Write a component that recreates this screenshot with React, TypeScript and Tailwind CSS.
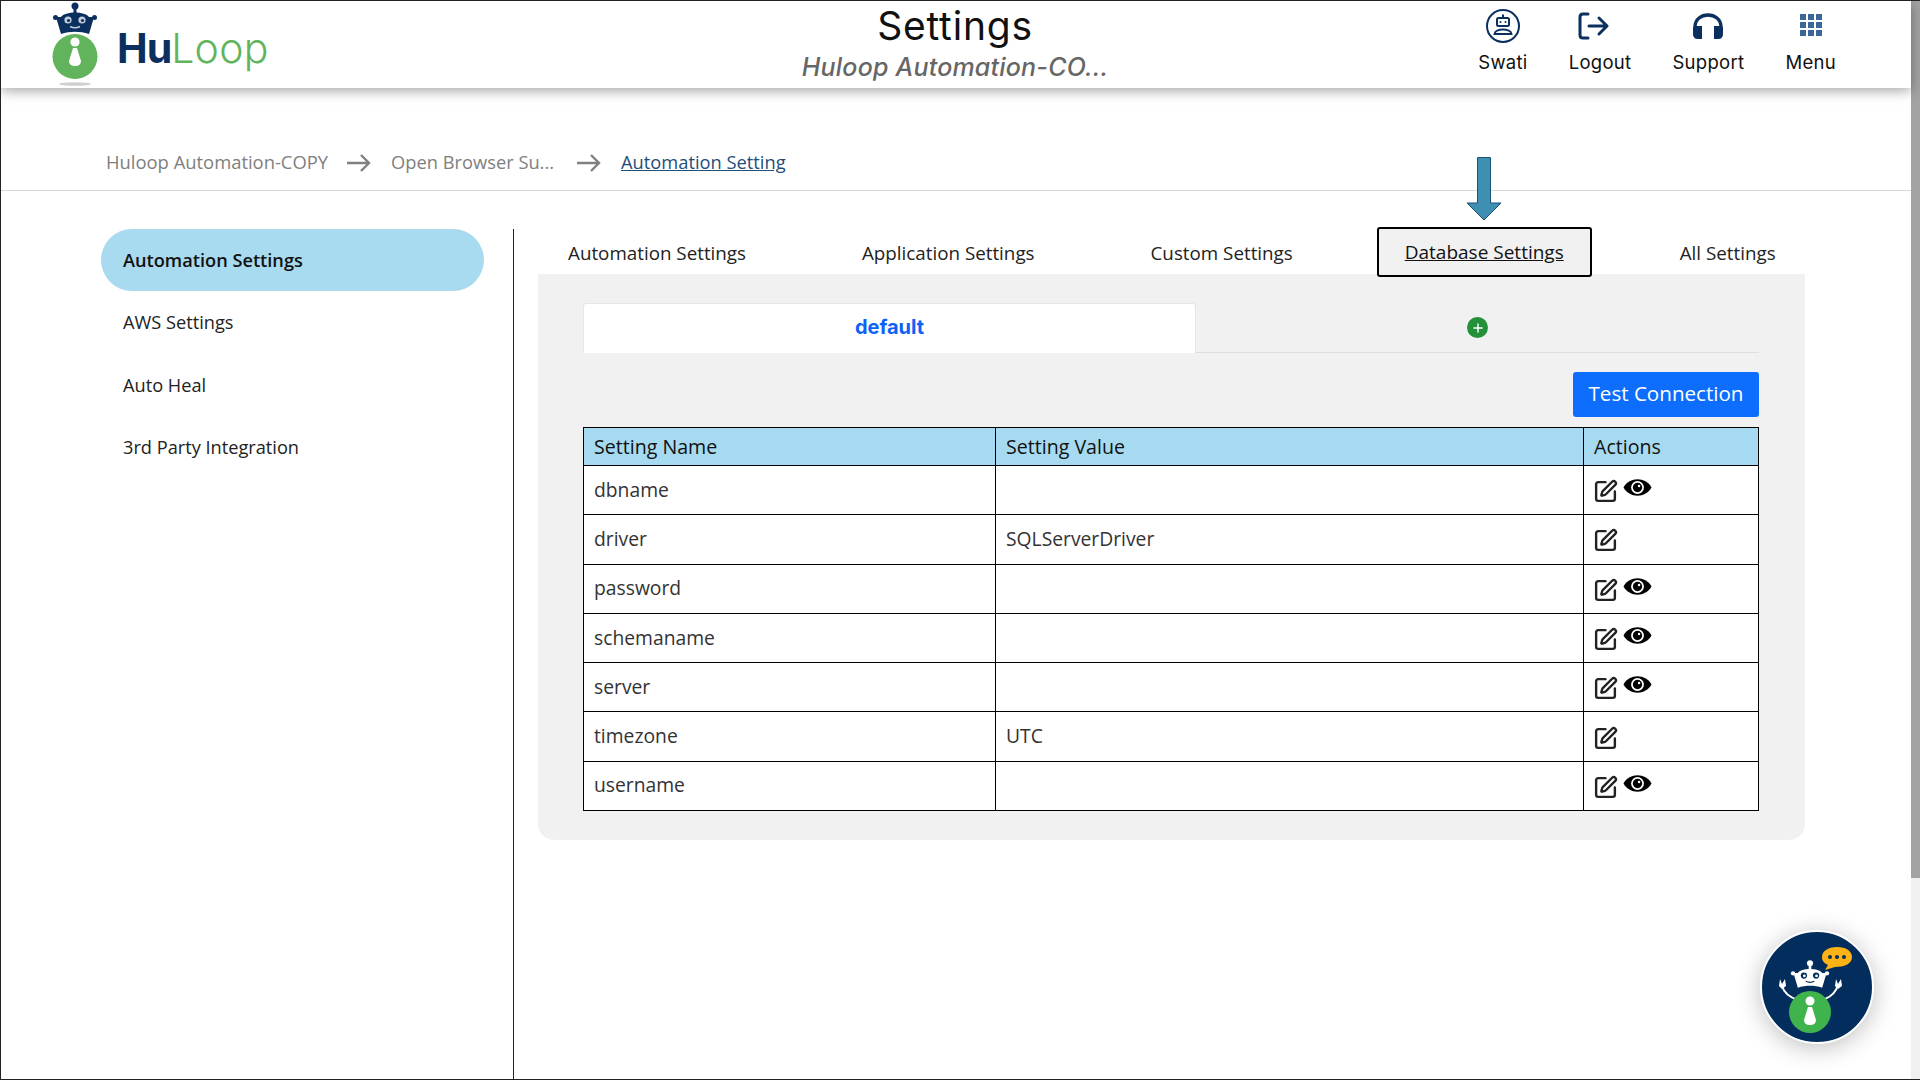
import type { ReactNode } from "react";
import { SquarePen, Plus } from "lucide-react";

const rows = [
	{ name: "dbname", value: "", eye: true },
	{ name: "driver", value: "SQLServerDriver", eye: false },
	{ name: "password", value: "", eye: true },
	{ name: "schemaname", value: "", eye: true },
	{ name: "server", value: "", eye: true },
	{ name: "timezone", value: "UTC", eye: false },
	{ name: "username", value: "", eye: true },
];

const sideItems = ["AWS Settings", "Auto Heal", "3rd Party Integration"];
const tabs = [
	"Automation Settings",
	"Application Settings",
	"Custom Settings",
	"Database Settings",
	"All Settings",
];

function RobotHead({ fill, eye }: { fill: string; eye: string }) {
	return (
		<g>
			<circle cx="23" cy="5" r="3.5" fill={fill} />
			<rect x="21.5" y="7" width="3" height="5" fill={fill} />
			<path
				d="M9 16 C13 10 33 10 37 16 L42 16 L37 33 C28 30 18 30 9 33 L4 16 Z"
				fill={fill}
			/>
			<circle cx="3.5" cy="16.5" r="2.5" fill={fill} />
			<circle cx="42.5" cy="16.5" r="2.5" fill={fill} />
			<circle cx="16" cy="19" r="3.6" fill={eye} />
			<circle cx="30" cy="19" r="3.6" fill={eye} />
			<circle cx="16.5" cy="19.5" r="1.6" fill={fill} />
			<circle cx="30.5" cy="19.5" r="1.6" fill={fill} />
			<path d="M18 25.5 Q23 28 28 25.5" stroke={eye} strokeWidth="1.4" fill="none" />
		</g>
	);
}

function Logo() {
	return (
		<svg width="46" height="86" viewBox="0 0 46 86" className="shrink-0">
			<RobotHead fill="#0b2f5f" eye="#c3cedb" />
			<circle cx="23" cy="55.5" r="22.5" fill="#62b45c" />
			<circle cx="23" cy="41" r="4.6" fill="#fff" />
			<path d="M21 47 H25 L29 60 Q29 65 23 65 Q17 65 17 60 Z" fill="#fff" />
			<ellipse cx="23" cy="83" rx="16" ry="1.8" fill="#cfcfcf" />
		</svg>
	);
}

function BotButton() {
	return (
		<div className="fixed right-[46px] bottom-[36px] w-[114px] h-[114px] rounded-full bg-[#032d5d] border-2 border-white shadow-[0_4px_24px_rgba(0,0,0,0.25)] overflow-hidden">
			<svg width="110" height="110" viewBox="0 0 110 110">
				<path
					d="M60 25 C60 18 68 15 75 15 C84 15 90 19 90 25 C90 32 82 35 73 35 L63 38 L66 33 C62 31 60 29 60 25 Z"
					fill="#fdb316"
				/>
				<circle cx="68" cy="25" r="2" fill="#032d5d" />
				<circle cx="75" cy="25" r="2" fill="#032d5d" />
				<circle cx="82" cy="25" r="2" fill="#032d5d" />
				<path
					d="M20 54 Q23 64 36 68 M76 53 Q73 63 63 67"
					stroke="#fff"
					strokeWidth="2"
					fill="none"
				/>
				<path
					d="M18 47 L20 52 L23 47 L24 54 L20 57 L17 54 Z M74 47 L76 52 L79 47 L80 54 L76 57 L73 54 Z"
					fill="#fff"
				/>
				<g transform="translate(28 27) scale(0.87)">
					<RobotHead fill="#fff" eye="#032d5d" />
				</g>
				<circle cx="48" cy="80" r="21" fill="#3fb44d" />
				<circle cx="48" cy="69" r="4.5" fill="#fff" />
				<path d="M46 75 H50 L54 88 Q54 93 48 93 Q42 93 42 88 Z" fill="#fff" />
			</svg>
		</div>
	);
}

function NavItem({ label, icon }: { label: string; icon: ReactNode }) {
	return (
		<div className="flex flex-col items-center">
			<div className="h-[38px] flex items-center justify-center">{icon}</div>
			<span className="text-[18.5px] leading-[24px] mt-[5px] tracking-[0.3px] text-[#111]">
				{label}
			</span>
		</div>
	);
}

function BreadArrow({ className }: { className: string }) {
	return (
		<svg width="24" height="20" viewBox="0 0 24 20" fill="none" className={className}>
			<path d="M0 10 H22 M14 2 L22 10 L14 18" stroke="#808080" strokeWidth="2.4" />
		</svg>
	);
}

function EyeIcon() {
	return (
		<svg width="29" height="19" viewBox="0 0 28 18" className="mb-[5px] ml-[5px]">
			<path d="M0.5 9 C6 -1.5 22 -1.5 27.5 9 C22 19.5 6 19.5 0.5 9 Z" fill="#000" />
			<circle cx="14" cy="9" r="6.2" fill="#fff" />
			<circle cx="14" cy="9" r="4.5" fill="#000" />
			<circle cx="15.5" cy="7.5" r="1.2" fill="#fff" />
		</svg>
	);
}

export default function App() {
	return (
		<div className="h-[1080px] overflow-hidden flex bg-white border-y border-l border-[#222] font-['Open_Sans',sans-serif] text-[#222]">
			<div className="flex-1 flex flex-col min-w-0">
				<header className="h-[87px] shrink-0 bg-white flex shadow-[0_3px_12px_rgba(0,0,0,0.35)] z-10 font-['Inter',sans-serif]">
					<div className="w-[954px] pl-[51px] flex items-start">
						<Logo />
						<div className="ml-[19px] mt-[22px] text-[41px] leading-[50px]">
							<span className="font-bold text-[#0b2f5f] tracking-[-1px]">Hu</span>
							<span className="font-light text-[#62b45c] tracking-[0.3px]">Loop</span>
						</div>
					</div>
					<div className="w-0 flex flex-col items-center">
						<div className="text-[39px] leading-[50px] tracking-[0.8px] whitespace-nowrap text-[#111]">
							Settings
						</div>
						<div className="text-[25px] leading-[32px] italic font-medium tracking-[0.2px] whitespace-nowrap text-[#666]">
							Huloop Automation-CO...
						</div>
					</div>
					<div className="ml-auto mr-[75px] mt-[6px] flex gap-[41px]">
						<NavItem
							label="Swati"
							icon={
								<svg width="36" height="36" viewBox="0 0 36 36" fill="none">
									<circle cx="18" cy="18" r="16" stroke="#0b2f5f" strokeWidth="2" />
									<rect x="12" y="10" width="12" height="8" rx="1.5" stroke="#0b2f5f" strokeWidth="2" />
									<path d="M18 6.5 V10" stroke="#0b2f5f" strokeWidth="2" />
									<circle cx="15.5" cy="14" r="1" fill="#0b2f5f" />
									<circle cx="20.5" cy="14" r="1" fill="#0b2f5f" />
									<path d="M9.5 26 C10 20 26 20 26.5 26 Z" stroke="#0b2f5f" strokeWidth="2" />
								</svg>
							}
						/>
						<NavItem
							label="Logout"
							icon={
								<svg width="32" height="28" viewBox="0 0 32 28" fill="none" className="-ml-[12px]">
									<path
										d="M10 2 H5 Q2 2 2 5 V23 Q2 26 5 26 H10"
										stroke="#0b2f5f"
										strokeWidth="3"
										strokeLinecap="round"
									/>
									<path
										d="M11 14 H29 M21 6 L29 14 L21 22"
										stroke="#0b2f5f"
										strokeWidth="3"
										strokeLinecap="round"
										strokeLinejoin="round"
									/>
								</svg>
							}
						/>
						<NavItem
							label="Support"
							icon={
								<svg width="32" height="28" viewBox="0 0 32 28" fill="none">
									<path d="M3 18 V15 C3 -1 29 -1 29 15 V18" stroke="#0b2f5f" strokeWidth="3.4" />
									<path d="M1 17 Q1 14 4 14 H10 V27 H6 Q1 27 1 22 Z" fill="#0b2f5f" />
									<path d="M31 17 Q31 14 28 14 H22 V27 H26 Q31 27 31 22 Z" fill="#0b2f5f" />
								</svg>
							}
						/>
						<NavItem
							label="Menu"
							icon={
								<div className="grid grid-cols-3 gap-[2px] -mt-[2px]">
									{Array.from({ length: 9 }).map((_, i) => (
										<div key={i} className="w-[6px] h-[6px] bg-[#3b6798]" />
									))}
								</div>
							}
						/>
					</div>
				</header>

				<div className="h-[103px] shrink-0 border-b border-[#d8d8d8] pl-[105px] pt-[61px] flex items-start text-[18.4px] leading-[26px] text-[#808080]">
					<span>Huloop Automation-COPY</span>
					<BreadArrow className="ml-[19px] mr-[20px] mt-[4px]" />
					<span className="text-[18.3px]">Open Browser Su...</span>
					<BreadArrow className="ml-[23px] mr-[20px] mt-[4px]" />
					<span className="text-[18.3px] text-[#1f4e79] underline">Automation Setting</span>
				</div>

				<div className="flex-1 flex min-h-0">
					<aside className="w-[513px] mt-[38px] shrink-0 border-r border-[#222] pl-[100px] pr-[29px] text-[18.2px]">
						<div className="h-[62px] rounded-[31px] bg-[#a8daf0] pl-[22px] pt-[1px] flex items-center font-semibold text-[#111]">
							Automation Settings
						</div>
						{sideItems.map((s) => (
							<div key={s} className="h-[62.5px] pl-[22px] pt-[1px] flex items-center">
								{s}
							</div>
						))}
					</aside>

					<main className="flex-1 pl-[24px] pr-[106px] pt-[36px] min-w-0">
						<div className="flex gap-[58px] pl-[1px] text-[18.8px] text-[#222]">
							{tabs.map((t) =>
								t === "Database Settings" ? (
									<div
										key={t}
										className="relative z-10 h-[50px] w-[215px] -ml-[3px] -mr-[2px] pt-[1px] flex items-center justify-center underline bg-[#f1f1f1] border-2 border-black rounded-[3px] text-[19px] text-[#111]"
									>
										{t}
										<svg
											width="36"
											height="64"
											viewBox="0 0 36 64"
											className="absolute -top-[72px] left-1/2 -translate-x-1/2"
										>
											<path
												d="M11.5 0.5 H24.5 V46 H35 L18 63 L1 46 H11.5 Z"
												fill="#3f8fb3"
												stroke="#1b4f78"
											/>
										</svg>
									</div>
								) : (
									<div
										key={t}
										className={
											t === "All Settings"
												? "h-[50px] pl-[32px] flex items-center pt-[3px]"
												: "h-[50px] px-[29px] flex items-center pt-[3px]"
										}
									>
										{t}
									</div>
								),
							)}
						</div>
						<div className="-mt-[3px] h-[566px] bg-[#f1f1f1] rounded-b-[16px] pl-[45px] pr-[46px] pt-[29px]">
							<div className="flex h-[50px] border-b border-[#dedede]">
								<div className="w-[613px] h-[50px] bg-white border border-[#e6e6e6] border-b-0 rounded-t-[3px] pb-[4px] flex items-center justify-center font-['Inter',sans-serif] font-bold text-[20px] text-[#0d62f5]">
									default
								</div>
								<div className="flex-1 flex items-center justify-center">
									<div className="w-[21px] h-[21px] rounded-full bg-[#23903a] flex items-center justify-center">
										<Plus size={14} strokeWidth={2.5} color="#fff" />
									</div>
								</div>
							</div>
							<div className="flex justify-end mt-[19px]">
								<button className="w-[186px] h-[45px] rounded-[3px] bg-[#0d6efd] text-white text-[20.6px] font-medium pb-[2px]">
									Test Connection
								</button>
							</div>
							<table className="mt-[10px] w-full table-fixed border-collapse text-[19.3px] text-[#333]">
								<thead>
									<tr className="h-[38px] bg-[#a6daf0]">
										<th className="w-[412px] border border-black pl-[10px] text-left font-medium text-[19.6px] text-[#111]">
											Setting Name
										</th>
										<th className="w-[588px] border border-black pl-[10px] text-left font-medium text-[19.6px] text-[#111]">
											Setting Value
										</th>
										<th className="border border-black pl-[10px] text-left font-medium text-[19.6px] text-[#111]">
											Actions
										</th>
									</tr>
								</thead>
								<tbody>
									{rows.map((r) => (
										<tr key={r.name} className="h-[49.3px]">
											<td className="border border-black pl-[10px] bg-white">{r.name}</td>
											<td className="border border-black pl-[10px] bg-white">{r.value}</td>
											<td className="border border-black pl-[9px] bg-white">
												<div className="flex items-center">
													<SquarePen size={25} strokeWidth={2.3} color="#222" className="mt-[3px]" />
													{r.eye && <EyeIcon />}
												</div>
											</td>
										</tr>
									))}
								</tbody>
							</table>
						</div>
					</main>
				</div>
				<BotButton />
			</div>
			<div className="w-[9px] shrink-0 bg-[#f0f0f0]">
				<div className="h-[877px] bg-[#a3a3a3]" />
			</div>
		</div>
	);
}
